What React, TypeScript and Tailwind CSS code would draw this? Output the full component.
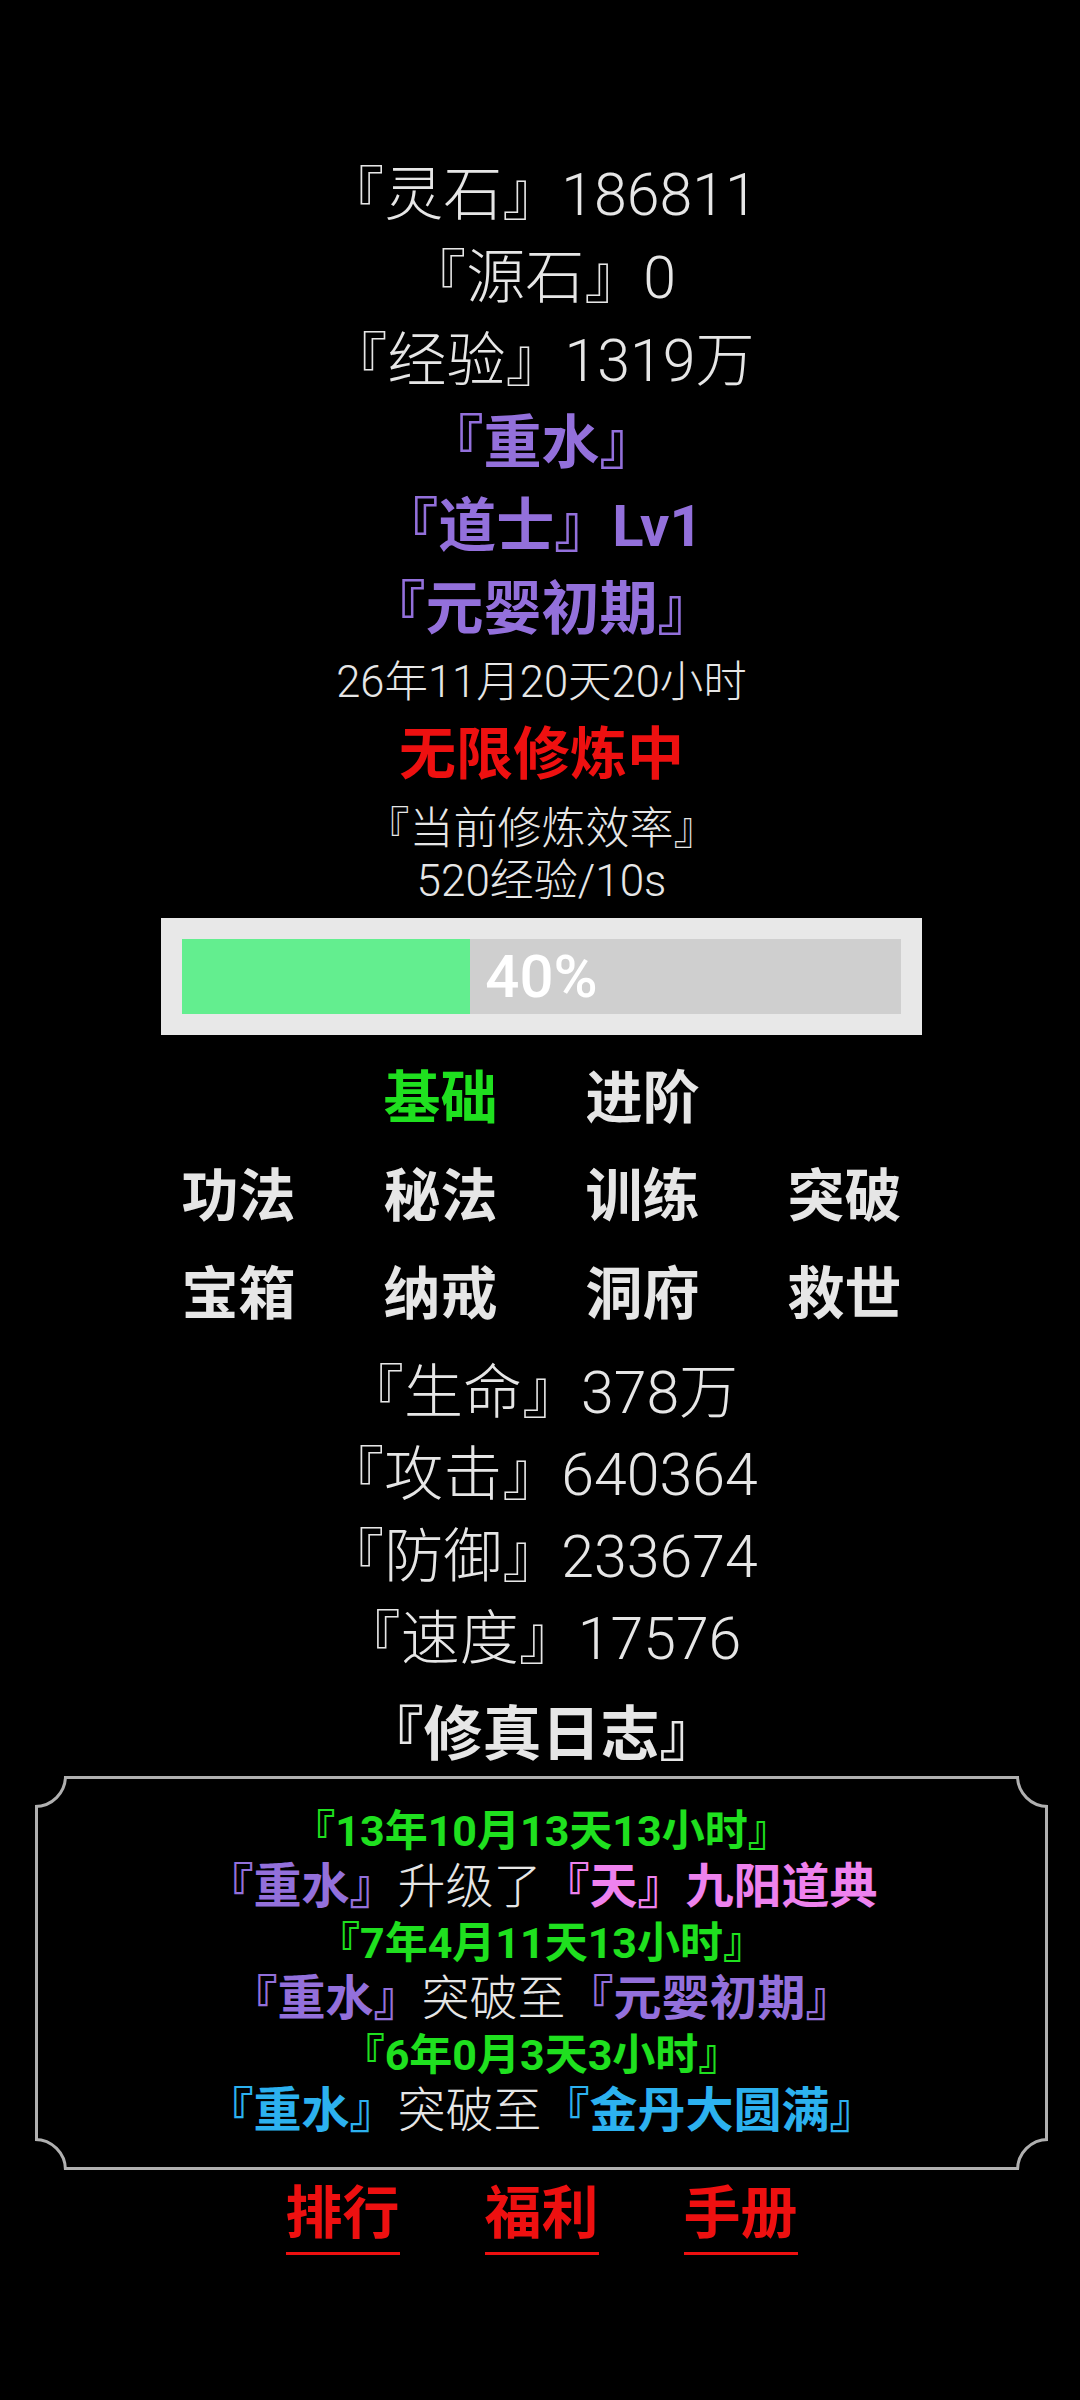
const font = "font-['Roboto','Noto_Sans_CJK_SC',sans-serif]";

const stats = [
  { label: '生命', value: '378万' },
  { label: '攻击', value: '640364' },
  { label: '防御', value: '233674' },
  { label: '速度', value: '17576' },
];

const menu = ['功法', '秘法', '训练', '突破', '宝箱', '纳戒', '洞府', '救世'];

function Corner({ pos }: { pos: string }) {
  return (
    <div
      className={`absolute h-[64px] w-[64px] rounded-full border-[3px] border-[#b0b0b0] bg-black ${pos}`}
    />
  );
}

function CultivationLog() {
  return (
    <div className="relative mt-px mx-auto w-[1013px] overflow-hidden">
      <div className="border-[3px] border-[#b0b0b0] pt-[24px] pb-[28px] text-center">
        <p className="text-[43px] leading-[56px] font-bold text-[#1fe01f]">『13年10月13天13小时』</p>
        <p className="text-[48px] leading-[56px]">
          <span className="font-bold text-[#9370db]">『重水』</span>
          <span className="font-light text-[#e6e6e6]">升级了</span>
          <span className="font-bold text-[#ee82ee]">『天』九阳道典</span>
        </p>
        <p className="text-[43px] leading-[56px] font-bold text-[#1fe01f]">『7年4月11天13小时』</p>
        <p className="text-[48px] leading-[56px]">
          <span className="font-bold text-[#9370db]">『重水』</span>
          <span className="font-light text-[#e6e6e6]">突破至</span>
          <span className="font-bold text-[#9370db]">『元婴初期』</span>
        </p>
        <p className="text-[43px] leading-[56px] font-bold text-[#1fe01f]">『6年0月3天3小时』</p>
        <p className="text-[48px] leading-[56px]">
          <span className="font-bold text-[#2cb1ef]">『重水』</span>
          <span className="font-light text-[#e6e6e6]">突破至</span>
          <span className="font-bold text-[#2cb1ef]">『金丹大圆满』</span>
        </p>
      </div>
      <Corner pos="-top-[32px] -left-[32px]" />
      <Corner pos="-top-[32px] -right-[32px]" />
      <Corner pos="-bottom-[32px] -left-[32px]" />
      <Corner pos="-bottom-[32px] -right-[32px]" />
    </div>
  );
}

export default function App() {
  const progress = 40;

  return (
    <div className={`min-h-[2400px] w-full bg-black pl-[3px] pt-[153px] text-center ${font}`}>
      {/* resources */}
      <div className="text-[59px] leading-[83px] font-light text-[#e6e6e6]">
        <p>『灵石』186811</p>
        <p>『源石』0</p>
        <p>『经验』1319万</p>
      </div>
      <div className="text-[58px] leading-[83px] font-bold text-[#9370db]">
        <p>『重水』</p>
        <p>『道士』Lv1</p>
        <p>『元婴初期』</p>
      </div>
      <p className="text-[43.5px] leading-[64px] font-light text-[#e6e6e6]">26年11月20天20小时</p>
      <p className="text-[57px] leading-[80px] font-bold text-[#ee1010]">无限修炼中</p>
      <div className="mt-[8px] text-[44px] leading-[52px] font-light text-[#e6e6e6]">
        <p>『当前修炼效率』</p>
        <p>520经验/10s</p>
      </div>

      {/* progress */}
      <div className="relative mx-auto mt-[11px] w-[761px] bg-[#e8e8e8] p-[21px]">
        <div className="h-[75px] w-full bg-[#cfcfcf]">
          <div className="h-full bg-[#63ee8f]" style={{ width: `${progress}%` }} />
        </div>
        <span className="absolute inset-0 flex items-center justify-center text-[60px] font-medium text-white">
          {progress}%
        </span>
      </div>

      {/* menu */}
      <div className="mx-auto mt-[15px] grid w-[808px] grid-cols-4 text-[57px] leading-[98px] font-bold text-[#e6e6e6]">
        <span className="col-start-2 text-[#1fe01f]">基础</span>
        <span>进阶</span>
        <span />
        {menu.map((m) => (
          <span key={m}>{m}</span>
        ))}
      </div>

      {/* attributes */}
      <div className="mt-[8px] text-[59px] leading-[82px] font-light text-[#e6e6e6]">
        {stats.map((s) => (
          <p key={s.label}>
            『{s.label}』{s.value}
          </p>
        ))}
      </div>

      <p className="mt-[15px] text-[59px] leading-[80px] font-bold text-[#e6e6e6]">『修真日志』</p>
      <CultivationLog />

      {/* footer links */}
      <div className="mt-[12px] flex justify-center gap-[85px]">
        {['排行', '福利', '手册'].map((l) => (
          <a
            key={l}
            className="border-b-[3px] border-[#ee1010] pb-[6px] text-[57px] leading-[64px] font-bold text-[#ee1010]"
          >
            {l}
          </a>
        ))}
      </div>
    </div>
  );
}
